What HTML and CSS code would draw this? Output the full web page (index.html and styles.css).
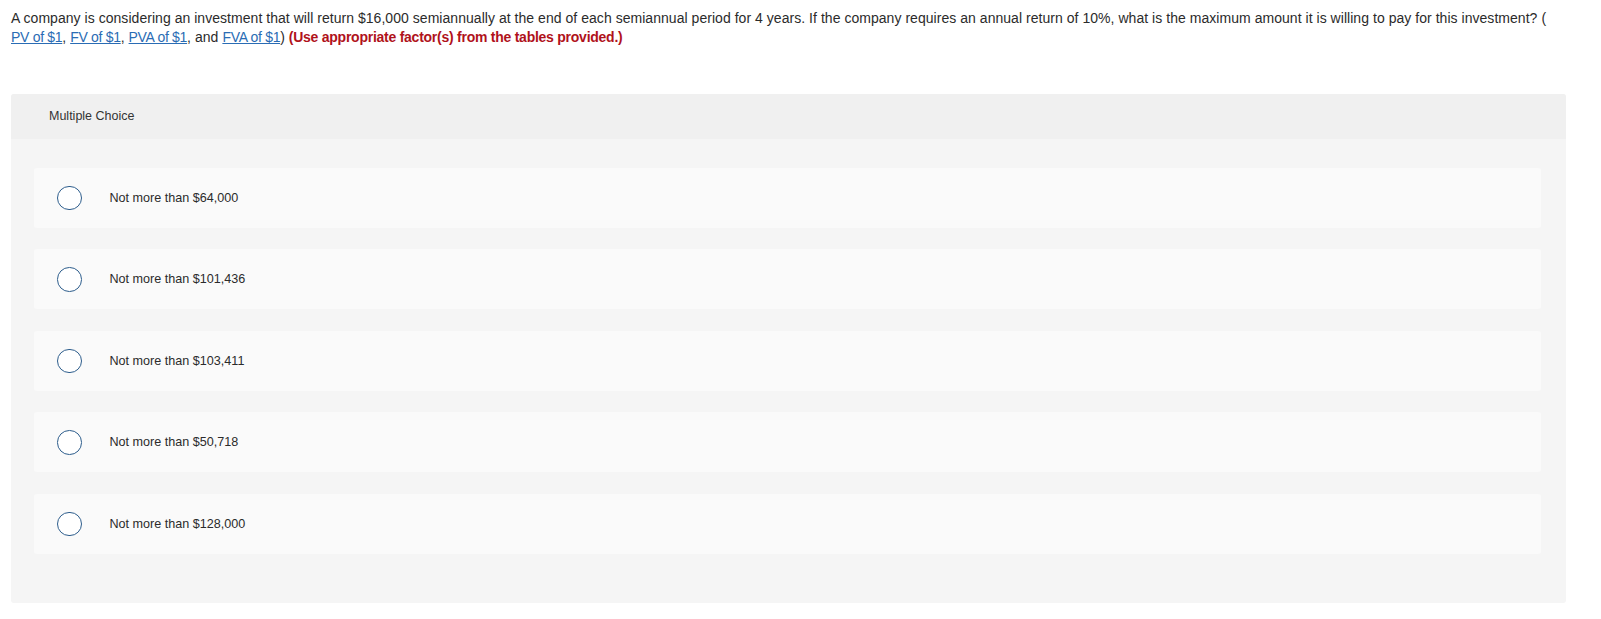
FILE: index.html
```html
<!DOCTYPE html>
<html>
<head>
<meta charset="utf-8">
<link rel="stylesheet" href="styles.css">
</head>
<body>
<p class="question">A company is considering an investment that will return $16,000 semiannually at the end of each semiannual period for 4 years. If the company requires an annual return of 10%, what is the maximum amount it is willing to pay for this investment? ( <a href="#">PV of $1</a>, <a href="#">FV of $1</a>, <a href="#">PVA of $1</a>, and <a href="#">FVA of $1</a>) <strong class="note">(Use appropriate factor(s) from the tables provided.)</strong></p>
<div class="panel">
  <div class="panel-head">Multiple Choice</div>
  <div class="panel-body">
    <label class="choice"><span class="radio"></span><span class="choice-text">Not more than $64,000</span></label>
    <label class="choice"><span class="radio"></span><span class="choice-text">Not more than $101,436</span></label>
    <label class="choice"><span class="radio"></span><span class="choice-text">Not more than $103,411</span></label>
    <label class="choice"><span class="radio"></span><span class="choice-text">Not more than $50,718</span></label>
    <label class="choice"><span class="radio"></span><span class="choice-text">Not more than $128,000</span></label>
  </div>
</div>
</body>
</html>
```

FILE: styles.css
```css
html, body {
  margin: 0;
  padding: 0;
  background: #ffffff;
}
body {
  font-family: "Liberation Sans", Arial, sans-serif;
  color: #2b2b2b;
}
.question {
  margin: 9px 40px 0 11px;
  font-size: 14px;
  line-height: 19.4px;
  letter-spacing: 0.04px;
}
.question a {
  color: #2a6cb4;
  text-decoration: underline;
  letter-spacing: -0.3px;
}
.note {
  color: #b0121b;
  font-weight: bold;
  letter-spacing: -0.25px;
}
.panel {
  margin: 46px 35px 0 11px;
  border-radius: 3px;
  overflow: hidden;
  background: #f5f5f5;
}
.panel-head {
  background: #f0f0f0;
  height: 45px;
  line-height: 45px;
  padding-left: 38px;
  font-size: 12.5px;
  color: #333;
}
.panel-body {
  padding: 29px 25px 49px 23px;
  display: flex;
  flex-direction: column;
  gap: 21.5px;
}
.choice {
  display: flex;
  align-items: center;
  height: 60px;
  background: #fafafa;
  border-radius: 3px;
  padding-left: 23px;
}
.radio {
  width: 22.5px;
  height: 22.5px;
  border: 1.5px solid #2d5d8c;
  border-radius: 50%;
  background: #ffffff;
  flex: none;
}
.choice-text {
  margin-left: 28px;
  font-size: 12.6px;
  color: #2b2b2b;
  line-height: 14px;
}
```
